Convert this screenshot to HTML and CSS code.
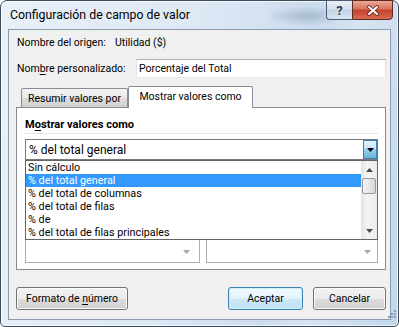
FILE: index.html
```html
<!DOCTYPE html>
<html lang="es">
<head>
  <meta charset="UTF-8">
  <title>Configuración de campo de valor</title>
  <link rel="stylesheet" href="styles.css">
</head>
<body>

  <div class="window">
    <div class="titlebar">
      <span class="title">Configuración de campo de valor</span>
      <div class="caption-buttons">
        <span class="cap-btn help">?</span>
        <span class="cap-btn close">
          <svg width="14" height="11" viewBox="0 0 14 11">
            <path d="M3 2 L11 9 M11 2 L3 9" stroke="#5a2a22" stroke-width="3.6" stroke-linecap="round"/>
            <path d="M3 2 L11 9 M11 2 L3 9" stroke="#fff" stroke-width="2" stroke-linecap="round"/>
          </svg>
        </span>
      </div>
    </div>

    <div class="client">
      <div class="row source">
        <span class="source-label">Nombre del origen:</span>
        <span>Utilidad ($)</span>
      </div>

      <div class="row custom">
        <label for="customName" class="custom-label">Nom<u>b</u>re personalizado:</label>
        <input type="text" id="customName" class="text-input" value="Porcentaje del Total">
      </div>

      <div class="tabs">
        <div class="tab">Resumir valores por</div>
        <div class="tab active">Mostrar valores como</div>
      </div>

      <div class="tab-panel">
        <div class="group-title">M<u>o</u>strar valores como</div>
        <div class="rule"></div>

        <div class="combo">
          <span class="combo-text">% del total general</span>
          <span class="combo-btn">
            <svg width="7" height="4" viewBox="0 0 7 4"><path d="M0 0 H7 L3.5 4 Z" fill="#000"/></svg>
          </span>

          <div class="dropdown">
            <ul class="options">
              <li>Sin cálculo</li>
              <li class="selected">% del total general</li>
              <li>% del total de columnas</li>
              <li>% del total de filas</li>
              <li>% de</li>
              <li>% del total de filas principales</li>
            </ul>
            <div class="scrollbar">
              <span class="scroll-arrow">
                <svg width="7" height="4" viewBox="0 0 7 4"><path d="M0 4 H7 L3.5 0 Z" fill="#4a4a4a"/></svg>
              </span>
              <span class="scroll-thumb"></span>
              <span class="scroll-arrow bottom">
                <svg width="7" height="4" viewBox="0 0 7 4"><path d="M0 0 H7 L3.5 4 Z" fill="#4a4a4a"/></svg>
              </span>
            </div>
          </div>
        </div>

        <div class="base-lists">
          <div class="listbox small">
            <span class="list-arrow">
              <svg width="7" height="4" viewBox="0 0 7 4"><path d="M0 0 H7 L3.5 4 Z" fill="#a8a8a8"/></svg>
            </span>
          </div>
          <div class="listbox">
            <span class="list-arrow">
              <svg width="7" height="4" viewBox="0 0 7 4"><path d="M0 0 H7 L3.5 4 Z" fill="#a8a8a8"/></svg>
            </span>
          </div>
        </div>
      </div>

      <div class="buttons">
        <button class="btn format">Formato de <u>n</u>úmero</button>
        <button class="btn default">Aceptar</button>
        <button class="btn cancel">Cancelar</button>
      </div>
    </div>

    <svg class="grip" width="10" height="10" viewBox="0 0 10 10">
      <rect x="7" y="1" width="2" height="2" fill="#8a9ab0"/>
      <rect x="4" y="4" width="2" height="2" fill="#8a9ab0"/>
      <rect x="7" y="4" width="2" height="2" fill="#8a9ab0"/>
      <rect x="1" y="7" width="2" height="2" fill="#8a9ab0"/>
      <rect x="4" y="7" width="2" height="2" fill="#8a9ab0"/>
      <rect x="7" y="7" width="2" height="2" fill="#8a9ab0"/>
    </svg>
  </div>

</body>
</html>
```

FILE: styles.css
```css
/* General */
body {
  margin: 0;
  background: #fff;
  font-family: Roboto, 'Liberation Sans', sans-serif;
  font-size: 10.5px;
  color: #000;
}

u {
  text-decoration-thickness: 1px;
  text-underline-offset: 2px;
}

/* Window frame */
.window {
  position: relative;
  width: 399px;
  height: 327px;
  box-sizing: border-box;
  border: 1px solid #3e4c5b;
  border-radius: 7px 7px 5px 5px;
  display: flex;
  flex-direction: column;
  background:
    radial-gradient(ellipse 40px 10px at 305px 15px, rgba(120, 145, 170, 0.45), transparent),
    linear-gradient(100deg, #e9f0f8 0%, #dde8f4 45%, #cbdcee 70%, #d6e4f2 80%, #c2d6eb 100%);
  box-shadow: inset 0 0 0 1px rgba(255, 255, 255, 0.7);
}

.titlebar {
  height: 28px;
  display: flex;
  align-items: flex-start;
}

.title {
  margin: 5px 0 0 9px;
  font-size: 12.3px;
  line-height: 18px;
}

.caption-buttons {
  display: flex;
  margin: -1px 5px 0 auto;
}

.cap-btn {
  height: 20px;
  box-sizing: border-box;
  display: flex;
  align-items: center;
  justify-content: center;
  border: 1px solid #4d5d6e;
}

.help {
  width: 26px;
  border-right: none;
  border-radius: 0 0 0 4px;
  background: linear-gradient(#eaf0f6, #d6e1ec 45%, #c3d2e2 50%, #d9e6f2);
  color: #203a58;
  font-weight: bold;
  font-size: 13px;
  text-shadow: 0 0 2px #fff;
}

.close {
  width: 41px;
  border-color: #5b2a22;
  border-radius: 0 0 4px 0;
  background: linear-gradient(#eaa796, #d6735d 45%, #c4412a 50%, #d86a50);
}

/* Client area */
.client {
  margin: 0 7px;
  height: 291px;
  box-sizing: border-box;
  border: 1px solid #8c9cae;
  background: #f0f0f0;
  padding: 6px 4px 9px 7px;
  display: flex;
  flex-direction: column;
}

.row {
  display: flex;
  align-items: center;
}

.source {
  height: 14px;
  line-height: 14px;
  padding-left: 1px;
}

.source-label {
  width: 98px;
}

.custom {
  margin-top: 9px;
  height: 19px;
}

.custom-label {
  width: 119px;
  padding-left: 1px;
}

.text-input {
  flex: 1;
  height: 19px;
  box-sizing: border-box;
  margin: 0;
  padding: 0 2px;
  border: 1px solid #abadb3;
  border-color: #abadb3 #dbdfe6 #e3e9ef #e2e3ea;
  background: #fff;
  font-family: inherit;
  font-size: inherit;
  color: #000;
}

/* Tabs */
.tabs {
  margin-top: 8px;
  height: 21px;
  display: flex;
  align-items: flex-end;
  padding-left: 5px;
}

.tab {
  width: 107px;
  height: 19px;
  box-sizing: border-box;
  border: 1px solid #898c95;
  border-bottom: none;
  border-radius: 2px 2px 0 0;
  background: linear-gradient(#f3f3f3, #ebebeb 50%, #dddddd 51%, #cfcfcf);
  text-align: center;
  line-height: 19px;
}

.tab.active {
  position: relative;
  z-index: 1;
  width: 125px;
  height: 22px;
  margin-bottom: -1px;
  background: #fff;
  line-height: 20px;
}

.tab-panel {
  height: 163px;
  box-sizing: border-box;
  border: 1px solid #898c95;
  background: #fff;
  padding: 9px 7px 6px 8px;
  display: flex;
  flex-direction: column;
}

.group-title {
  font-weight: bold;
  font-size: 11.1px;
  line-height: 16px;
  height: 16px;
}

.rule {
  height: 1px;
  background: #e6e6e6;
}

/* Combo box and its open list */
.combo {
  position: relative;
  margin-top: 5px;
  height: 21px;
  box-sizing: border-box;
  border: 1px solid #7a7a7a;
  background: #fff;
  display: flex;
  align-items: center;
}

.combo-text {
  padding-left: 3px;
  font-size: 12px;
}

.combo-btn {
  margin-left: auto;
  width: 14px;
  height: 19px;
  box-sizing: border-box;
  border: 1px solid #3c7fb1;
  background: linear-gradient(#e5f4fc, #c4e5f6 45%, #98d1ef 50%, #68b3db);
  display: flex;
  align-items: center;
  justify-content: center;
}

.dropdown {
  position: absolute;
  top: calc(100% + 1px);
  left: -1px;
  z-index: 2;
  width: 353px;
  height: 80px;
  box-sizing: border-box;
  border: 1px solid #646464;
  background: #fff;
  display: flex;
}

.options {
  flex: 1;
  list-style: none;
  margin: 0;
  padding: 0;
}

.options li {
  height: 13px;
  line-height: 13px;
  padding-left: 2px;
  font-size: 10.8px;
  white-space: nowrap;
}

.options li.selected {
  background: #3399ff;
  color: #fff;
}

.scrollbar {
  width: 16px;
  display: flex;
  flex-direction: column;
  background: linear-gradient(to right, #e3e3e3, #f4f4f4 40%, #ececec);
}

.scroll-arrow {
  height: 17px;
  display: flex;
  align-items: center;
  justify-content: center;
}

.scroll-arrow.bottom {
  margin-top: auto;
}

.scroll-thumb {
  height: 16px;
  margin: 0 1px;
  box-sizing: border-box;
  border: 1px solid #9a9a9a;
  border-radius: 2px;
  background: linear-gradient(to right, #f5f5f5, #e6e6e6 50%, #d6d6d6);
}

/* Lists behind the dropdown */
.base-lists {
  margin-top: 25px;
  height: 78px;
  display: flex;
  gap: 6px;
}

.listbox {
  flex: 1;
  box-sizing: border-box;
  border: 1px solid #abadb3;
  background: #fff;
  display: flex;
  justify-content: flex-end;
  align-items: flex-end;
}

.listbox.small {
  flex: none;
  width: 175px;
}

.list-arrow {
  width: 17px;
  height: 17px;
  margin: 0 1px 2px 0;
  display: flex;
  align-items: center;
  justify-content: center;
}

.listbox.small .list-arrow {
  margin-right: 4px;
}

/* Bottom buttons */
.buttons {
  margin-top: 17px;
  height: 23px;
  display: flex;
}

.btn {
  height: 23px;
  box-sizing: border-box;
  margin: 0;
  padding: 0;
  border: 1px solid #707070;
  border-radius: 3px;
  background: linear-gradient(#f2f2f2, #ebebeb 50%, #dddddd 51%, #cfcfcf);
  box-shadow: inset 0 0 0 1px #fcfcfc;
  font-family: inherit;
  font-size: inherit;
  color: #000;
}

.btn.format {
  width: 112px;
}

.btn.default {
  width: 75px;
  margin-left: auto;
  border-color: #3c7fb1;
  background: linear-gradient(#f2f9fd, #e3f2fb 50%, #cfe9f8 51%, #bfe0f3);
  box-shadow: inset 0 0 0 1px #cdeefb;
}

.btn.cancel {
  width: 73px;
  margin-left: 10px;
}

.grip {
  position: absolute;
  right: 1px;
  bottom: 7px;
}
```
